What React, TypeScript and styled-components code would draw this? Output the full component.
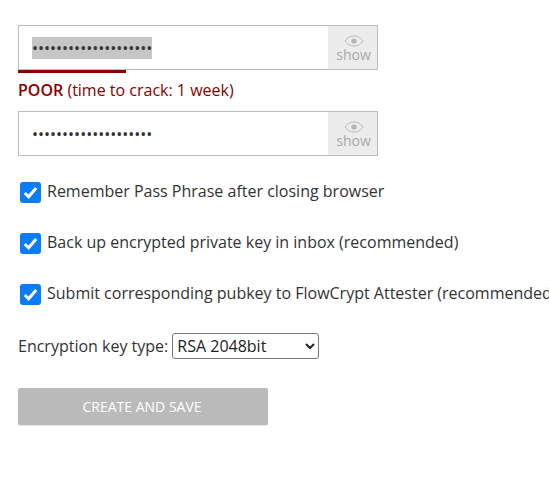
import React from 'react';
import styled, { createGlobalStyle } from 'styled-components';

const GlobalStyle = createGlobalStyle`
  html, body {
    margin: 0;
    padding: 0;
    background: #fff;
    overflow: hidden;
  }
  body {
    font-family: "Open Sans", "Liberation Sans", sans-serif;
    font-size: 16px;
    color: #333;
  }
`;

const Page = styled.div`
  width: 549px;
  height: 489px;
  overflow: hidden;
  padding: 25px 0 0 18px;
  box-sizing: border-box;
`;

const Field = styled.div`
  display: flex;
  width: 360px;
  height: 45px;
  box-sizing: border-box;
  border: 1px solid #bcbcbc;
  background: #fff;
`;

const Value = styled.div`
  flex: 1;
  display: flex;
  align-items: center;
  padding-left: 13px;
`;

const Dots = styled.span<{ $selected?: boolean }>`
  display: block;
  width: 120px;
  height: 22px;
  line-height: 22px;
  overflow: hidden;
  white-space: nowrap;
  color: #333;
  background: ${(p) => (p.$selected ? '#c6c6c6' : 'transparent')};
`;

const Show = styled.div`
  width: 49px;
  background: #ececec;
  color: #a9a9a9;
  display: flex;
  flex-direction: column;
  align-items: center;
  font-size: 14px;
  line-height: 16px;
  padding: 9px 0 0 2px;
  box-sizing: border-box;
  svg {
    display: block;
  }
`;

const Bar = styled.div`
  width: 108px;
  height: 3px;
  background: #8b0000;
`;

const Strength = styled.div`
  color: #8b0000;
  line-height: 22px;
  margin: 6px 0 10px;
  b {
    font-weight: 600;
  }
`;

const Check = styled.label`
  display: flex;
  align-items: flex-start;
  height: 22px;
  white-space: nowrap;
  margin: 0 0 29px 2px;
  &:first-of-type {
    margin-top: 26px;
  }
`;

const Box = styled.span`
  flex: none;
  width: 21px;
  height: 21px;
  border-radius: 3px;
  background: #0b7cf7;
  margin-right: 6px;
  display: flex;
  align-items: center;
  justify-content: center;
`;

const CheckText = styled.span`
  line-height: 22px;
  margin-top: -2px;
`;

const KeyRow = styled.div`
  display: flex;
  align-items: center;
  height: 26px;
  margin-top: -2px;
`;

const KeySelect = styled.select`
  width: 147px;
  height: 26px;
  margin-left: 4px;
  font-family: "Open Sans", sans-serif;
  font-size: 16px;
  color: #222;
  background: #fff;
  border: 1px solid #767676;
  border-radius: 3px;
  padding: 0;
`;

const Create = styled.button`
  display: block;
  width: 250px;
  height: 37px;
  margin-top: 29px;
  padding: 0 14px 0 12px;
  border: 0;
  border-radius: 2px;
  background: #bababa;
  box-shadow: 0 1px 1px rgba(0, 0, 0, 0.1);
  color: #fff;
  font-family: "Open Sans", sans-serif;
  font-size: 14px;
  font-weight: 400;
`;

const Eye = () => (
  <svg width="20" height="12" viewBox="0 0 20 12" fill="none">
    <path d="M1 6C4 2 7 1 10 1s6 1 9 5c-3 4-6 5-9 5S4 10 1 6Z" stroke="#b5b5b5" strokeWidth="1" />
    <circle cx="10" cy="6" r="2.6" fill="#b5b5b5" />
  </svg>
);

const Tick = () => (
  <svg width="15" height="13" viewBox="0 0 15 13" fill="none">
    <path d="M1.8 7 5.6 10.8 13.2 2" stroke="#fff" strokeWidth="3" />
  </svg>
);

const dots = '•'.repeat(20);

const PassField = ({ selected }: { selected?: boolean }) => (
  <Field>
    <Value>
      <Dots $selected={selected}>{dots}</Dots>
    </Value>
    <Show>
      <Eye />
      show
    </Show>
  </Field>
);

const Option = ({ children }: { children: React.ReactNode }) => (
  <Check>
    <Box>
      <Tick />
    </Box>
    <CheckText>{children}</CheckText>
  </Check>
);

export default function App() {
  return (
    <Page>
      <GlobalStyle />
      <PassField selected />
      <Bar />
      <Strength>
        <b>POOR</b> (time to crack: 1 week)
      </Strength>
      <PassField />
      <Option>Remember Pass Phrase after closing browser</Option>
      <Option>Back up encrypted private key in inbox (recommended)</Option>
      <Option>Submit corresponding pubkey to FlowCrypt Attester (recommended)</Option>
      <KeyRow>
        Encryption key type:
        <KeySelect defaultValue="rsa2048">
          <option value="rsa2048">RSA 2048bit</option>
        </KeySelect>
      </KeyRow>
      <Create>CREATE AND SAVE</Create>
    </Page>
  );
}
